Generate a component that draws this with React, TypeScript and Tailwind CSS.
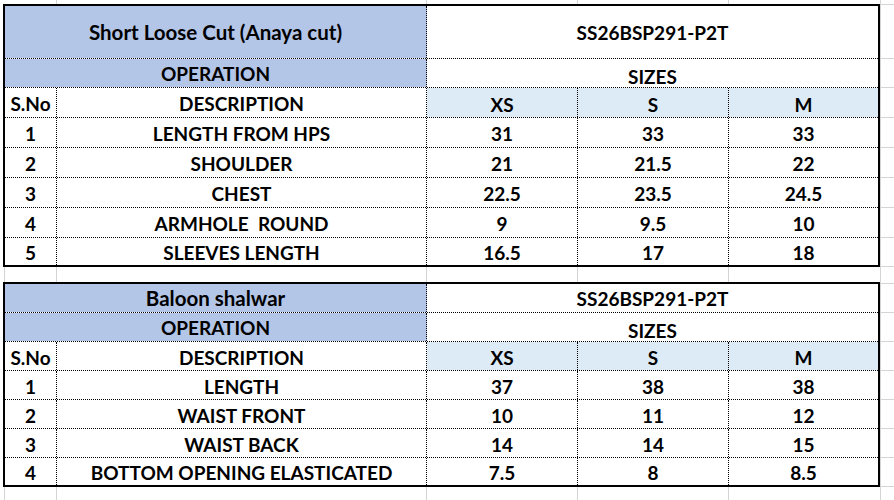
import React from 'react';

type Row = [string, string, string, string, string];

const SHORT_ROWS: Row[] = [
  ['1', 'LENGTH FROM HPS', '31', '33', '33'],
  ['2', 'SHOULDER', '21', '21.5', '22'],
  ['3', 'CHEST', '22.5', '23.5', '24.5'],
  ['4', 'ARMHOLE  ROUND', '9', '9.5', '10'],
  ['5', 'SLEEVES LENGTH', '16.5', '17', '18'],
];

const SHALWAR_ROWS: Row[] = [
  ['1', 'LENGTH', '37', '38', '38'],
  ['2', 'WAIST FRONT', '10', '11', '12'],
  ['3', 'WAIST BACK', '14', '14', '15'],
  ['4', 'BOTTOM OPENING ELASTICATED', '7.5', '8', '8.5'],
];

// excel gridline segments in the right margin (each ends with a line)
const MARGIN_SEGMENTS = [
  'h-[5px]', 'h-[54px]', 'h-[29px]', 'h-[30px]', 'h-[30px]', 'h-[30px]', 'h-[30px]', 'h-[30px]',
  'h-[29px]', 'h-[17px]', 'h-[29px]', 'h-[29px]', 'h-[29px]', 'h-[29px]', 'h-[29px]', 'h-[29px]', 'h-[29px]',
];

export default function App() {
  return (
    <div className="w-[894px] h-[500px] bg-white overflow-hidden flex font-['Lato','Liberation_Sans',sans-serif] font-bold text-[19px] text-black leading-none">
      <div className="w-[3px]" />

      <div className="w-[877px] flex flex-col">
        <GridStrip height="h-[4px]" />
        <SizeTable
          title="Short Loose Cut (Anaya cut)"
          code="SS26BSP291-P2T"
          rows={SHORT_ROWS}
          titleH="h-[53px]"
          opH="h-[29px]"
          headH="h-[30px]"
          rowH="h-[30px]"
        />
        <GridStrip height="h-[15px]" left />
        <SizeTable
          title="Baloon shalwar"
          code="SS26BSP291-P2T"
          rows={SHALWAR_ROWS}
          titleH="h-[29px]"
          opH="h-[29px]"
          headH="h-[29px]"
          rowH="h-[29px]"
        />
        <GridStrip height="flex-1" left />
      </div>

      <div className="flex-1 flex flex-col border-l border-[#d4d4d4]">
        {MARGIN_SEGMENTS.map((h, i) => (
          <div key={i} className={`${h} border-b border-[#d4d4d4]`} />
        ))}
        <div className="flex-1" />
      </div>
    </div>
  );
}

function GridStrip({ height, left }: { height: string; left?: boolean }) {
  return (
    <div className={`${height} flex`}>
      <div className={`w-[2px] ${left ? 'border-r border-[#d4d4d4]' : ''}`} />
      <div className="w-[52px] border-r border-[#d4d4d4]" />
      <div className="w-[370px] border-r border-[#d4d4d4]" />
      <div className="w-[151px] border-r border-[#d4d4d4]" />
      <div className="w-[151px] border-r border-[#d4d4d4]" />
      <div className="flex-1" />
    </div>
  );
}

function SizeTable({ title, code, rows, titleH, opH, headH, rowH }: {
  title: string; code: string; rows: Row[];
  titleH: string; opH: string; headH: string; rowH: string;
}) {
  return (
    <div className="border-2 border-black flex flex-col">
      {/* title row */}
      <div className={`${titleH} flex border-b border-dotted border-black`}>
        <div className="w-[422px] bg-[#b4c6e7] border-r border-dotted border-black flex items-center justify-center pt-[1px] text-[20.5px]">
          {title}
        </div>
        <div className="flex-1 flex items-center justify-center pt-[1px]">{code}</div>
      </div>

      {/* operation / sizes */}
      <div className={`${opH} flex border-b border-dotted border-black`}>
        <div className="w-[422px] bg-[#b4c6e7] border-r border-dotted border-black flex items-center justify-center pt-[1px]">
          OPERATION
        </div>
        <div className="flex-1 flex items-center justify-center pt-[6px]">SIZES</div>
      </div>

      {/* column headers */}
      <div className={`${headH} flex border-b border-dotted border-black`}>
        <div className="w-[52px] border-r border-dotted border-black flex items-center justify-center pt-[2px]">S.No</div>
        <div className="w-[370px] border-r border-dotted border-black flex items-center justify-center pt-[2px]">DESCRIPTION</div>
        <div className="w-[151px] bg-[#ddebf7] border-r border-dotted border-black flex items-center justify-center pt-[3px]">XS</div>
        <div className="w-[151px] bg-[#ddebf7] border-r border-dotted border-black flex items-center justify-center pt-[3px]">S</div>
        <div className="flex-1 bg-[#ddebf7] flex items-center justify-center pt-[3px]">M</div>
      </div>

      {rows.map((r, i) => {
        const last = i === rows.length - 1;
        return (
          <div key={r[0]} className={`${last ? 'h-[27px]' : `${rowH} border-b border-dotted border-black`} flex`}>
            <div className="w-[52px] border-r border-dotted border-black flex items-center justify-center pt-[2px]">{r[0]}</div>
            <div className="w-[370px] border-r border-dotted border-black flex items-center justify-center pt-[2px] whitespace-pre">{r[1]}</div>
            <div className="w-[151px] border-r border-dotted border-black flex items-center justify-center pt-[2px]">{r[2]}</div>
            <div className="w-[151px] border-r border-dotted border-black flex items-center justify-center pt-[2px]">{r[3]}</div>
            <div className="flex-1 flex items-center justify-center pt-[2px]">{r[4]}</div>
          </div>
        );
      })}
    </div>
  );
}
